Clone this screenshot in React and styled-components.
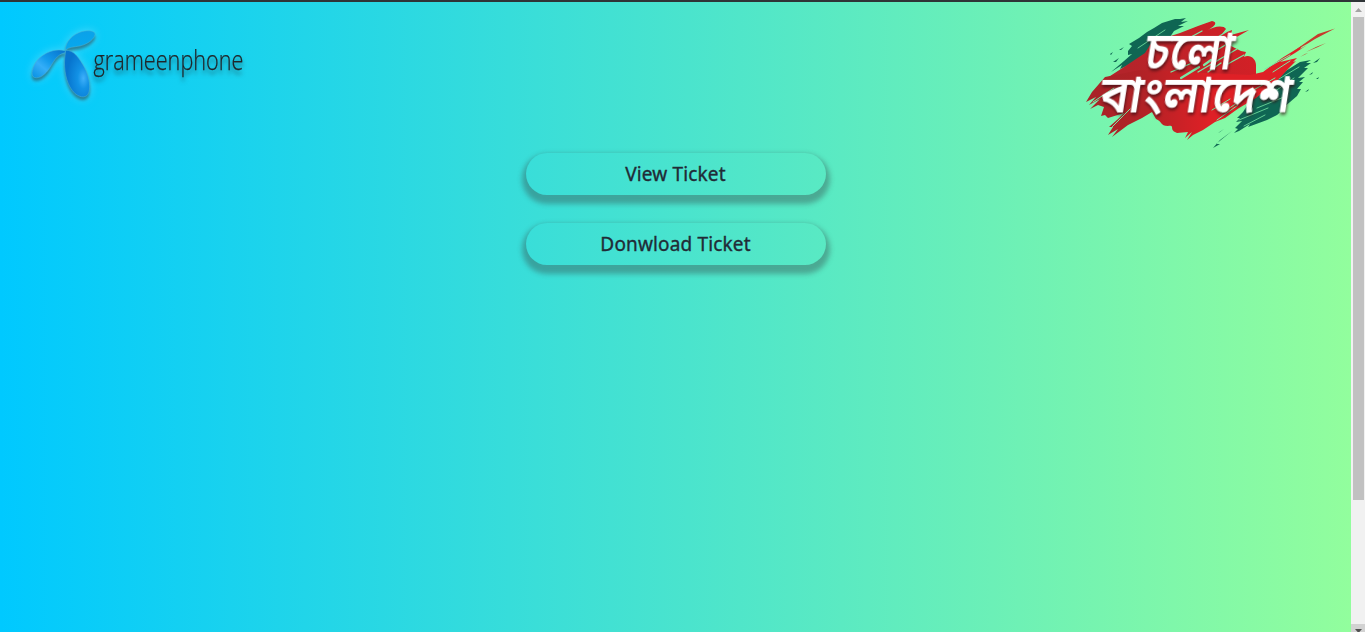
import React from 'react';
import styled, { createGlobalStyle } from 'styled-components';

const Global = createGlobalStyle`
  * { box-sizing: border-box; }
  html, body { margin: 0; overflow: hidden; }
`;

const Shell = styled.div`
  display: flex;
  height: 632px;
  border-top: 2px solid #2f3437;
`;

const Page = styled.main`
  flex: 1;
  background: linear-gradient(to right, #00c9ff, #92fe9d);
`;

const Header = styled.header`
  display: flex;
  justify-content: space-between;
  align-items: flex-start;
  height: 151px;
`;

const Brand = styled.svg`
  width: 260px;
  height: 120px;
  overflow: visible;
`;

const Leaves = styled.g`
  filter: drop-shadow(0 3px 1.5px rgba(40, 60, 70, 0.55)) drop-shadow(0 0 4px rgba(120, 225, 255, 0.6));
`;

const Wordmark = styled.text`
  font: 300 28px 'Open Sans', sans-serif;
  fill: #20262a;
  stroke: #20262a;
  stroke-width: 0.25px;
  filter: drop-shadow(0 4px 2px rgba(30, 50, 60, 0.6));
`;

const Campaign = styled.svg`
  width: 271px;
  height: 151px;
  overflow: visible;
`;

const Slogan = styled.text`
  font: 600 44px 'Noto Sans Bengali', sans-serif;
  fill: #fff;
  filter: drop-shadow(1px 2px 1.5px rgba(50, 10, 15, 0.7));
`;

const Actions = styled.nav`
  display: flex;
  flex-direction: column;
  align-items: center;
  gap: 28px;
`;

const Button = styled.button`
  width: 300px;
  height: 42px;
  padding: 0;
  border: 0;
  border-radius: 21px;
  background: transparent;
  color: #212b36;
  font: 400 19px/42px 'Noto Sans', sans-serif;
  letter-spacing: 0.15px;
  -webkit-text-stroke: 0.35px #212b36;
  box-shadow: 0 5px 5px 4px rgba(55, 75, 75, 0.4);
`;

const Scrollbar = styled.aside`
  display: flex;
  flex-direction: column;
  justify-content: space-between;
  align-items: center;
  width: 14px;
  overflow: hidden;
  background: #f1f1f1;
`;

const ScrollTop = styled.div`
  display: flex;
  flex-direction: column;
  align-items: center;
  padding-top: 6px;
  gap: 5px;
`;

const Arrow = styled.svg`
  display: block;
  width: 7px;
  height: 4px;
`;

const Thumb = styled.div`
  width: 11px;
  height: 483px;
  margin-left: 1px;
  background: #c1c1c1;
`;

const ScrollDown = styled.div`
  display: flex;
  justify-content: center;
  width: 14px;
  height: 8px;
  padding-top: 5px;
  background: #d2d2d2;
`;

function Logo() {
  return (
    <Brand viewBox="0 2 260 120">
      <defs>
        <linearGradient id="upper" x1="0" y1="0" x2="0.3" y2="1">
          <stop offset="0" stopColor="#0c9fe8" />
          <stop offset="1" stopColor="#06a9ee" />
        </linearGradient>
        <linearGradient id="left" x1="1" y1="0" x2="0" y2="1">
          <stop offset="0" stopColor="#0872cc" />
          <stop offset="0.45" stopColor="#129bec" />
          <stop offset="0.65" stopColor="#35aef8" />
          <stop offset="1" stopColor="#0690e2" />
        </linearGradient>
        <radialGradient id="lower" cx="0.75" cy="0.6" r="0.65">
          <stop offset="0" stopColor="#3fb0fa" />
          <stop offset="0.35" stopColor="#1292e6" />
          <stop offset="1" stopColor="#0774ce" />
        </radialGradient>
      </defs>
      <Leaves stroke="#4fb4d4" strokeWidth="0.5">
        <path fill="url(#upper)" d="M65.500 50C65 42 73 34 82 31.500C88 30 95.500 30.500 95 34.500C94.500 39 88 44 80 46C74 47 69 47 65.500 50Z" />
        <path fill="url(#left)" d="M65.500 51C56 47.500 43 53 37 60.500C33 65.500 29.500 76 34.500 77.500C40 79 45.500 74 49 69C53 63 56 54.500 65.500 52.500Z" />
        <path fill="url(#lower)" d="M65.500 50.500C73 49 80 59 84.500 67.500C88 74 91 85 89 92C87 98.500 80.500 98 75 93.500C67 86 64.500 73 64.500 63C64.500 57 65.500 54 65.500 50.500Z" />
      </Leaves>
      <Wordmark x="93.500" y="70" textLength="150" lengthAdjust="spacingAndGlyphs">grameenphone</Wordmark>
    </Brand>
  );
}

function CampaignLogo() {
  return (
    <Campaign viewBox="1080 2 271 151">
      <defs>
        <linearGradient id="paint" gradientUnits="userSpaceOnUse" x1="1100" y1="0" x2="1210" y2="0">
          <stop offset="0" stopColor="#a92327" />
          <stop offset="0.4" stopColor="#b22226" />
          <stop offset="1" stopColor="#df2026" />
        </linearGradient>
        <linearGradient id="upperPaint" gradientUnits="userSpaceOnUse" x1="1130" y1="80" x2="1255" y2="50">
          <stop offset="0" stopColor="#b4242a" />
          <stop offset="1" stopColor="#d32026" />
        </linearGradient>
      </defs>
      <g fill="#0f6653">
        <path d="M1186 18L1180 19L1175 19L1162 23L1154 28L1147 32L1139 38L1129 44L1132 46L1128 51L1128 55L1132 54L1124 61L1111 72L1122 65L1120 69L1142 59L1166 43L1174 31L1184 26L1178 26L1188 21L1181 22Z" />
        <path d="M1110 54L1113 52L1111 55ZM1119 50L1124 47L1121 50ZM1113 62L1119 58L1116 62Z" />
        <path d="M1311 60L1300 62L1284 72L1270 86L1250 101L1243 112L1237 118L1240 118L1236 122L1242 121L1235 128L1238 129L1234 133L1239 131L1250 124L1248 127L1267 120L1277 115L1285 108L1283 108L1297 96L1301 89L1297 89L1303 82L1299 82L1305 77L1298 78L1308 68L1304 68L1311 63L1306 63Z" />
        <path d="M1320 58L1313 63L1317 62ZM1232 131L1220 140L1213 148L1220 144L1216 144ZM1224 129L1218 133L1220 132ZM1313 72L1309 75L1312 74ZM1309 89L1305 92L1308 91ZM1319 77L1316 79L1318 79Z" />
      </g>
      <path fill="url(#upperPaint)" d="M1212 21C1217 22 1216 25 1211 28L1207 31C1213 26 1224 25 1226 29L1222 34L1232 30L1231 35L1249 30L1235 38L1229 45L1241 51L1246 52L1244 57C1250 54 1256 59 1256 65L1256 76L1220 91L1135 92L1104 80L1127 65L1145 53L1152 42L1180 33L1198 26Z" />
      <path fill="url(#paint)" d="M1105 77L1140 70L1250 75L1263 72L1282 58L1303 45L1300 49L1307 45L1295 53L1280 62L1297 58L1293 62L1296 61L1288 69L1278 80L1256 98L1239 108L1225 118L1215 122L1203 130L1193 135L1187 140L1192 132L1185 138L1188 132L1177 133C1168 130 1176 125 1168 126C1160 126 1162 121 1156 119L1152 112L1142 118L1128 125L1112 137L1118 129L1108 135L1113 127L1109 127L1118 119L1124 113L1108 118L1105 115L1101 116L1104 107L1098 105L1090 109L1100 99L1089 105L1096 97L1086 102L1092 92Z" />
      <path fill="#c63a2b" d="M1335 28.500L1318 34L1308 41L1294 51L1307 44L1315 39ZM1326 43L1316 47L1306 52L1318 47ZM1305 54L1300 57L1308 53Z" />
      <g fill="none" stroke="#79eaa5" strokeLinecap="round">
        <path strokeWidth="2.200" d="M1199 67L1181 78M1211 60L1204 65" />
        <path strokeWidth="1.300" d="M1226 32L1213 40M1237 38L1212 53M1237 49L1198 72M1221 63L1208 72M1244 55L1226 65M1202 31L1178 44M1192 63L1171 72" />
        <path strokeWidth="1" d="M1290 55L1265 69M1290 61L1273 72M1275 78L1248 93M1255 91L1222 113M1238 105L1217 120M1230 99L1212 110M1114 88L1093 102M1130 109L1112 127" />
        <path strokeWidth="0.800" d="M1299 67L1279 79M1294 78L1271 94M1284 97L1257 108M1268 108L1239 120M1265 115L1244 126M1165 30L1138 48" />
      </g>
      <Slogan transform="translate(1143 69.500) skewX(-9) scale(1 1.200)" textLength="88" lengthAdjust="spacingAndGlyphs">চলো</Slogan>
      <Slogan transform="translate(1098 112.500) skewX(-9) scale(1 1.180)" textLength="191" lengthAdjust="spacingAndGlyphs">বাংলাদেশ</Slogan>
    </Campaign>
  );
}

export default function App() {
  return (
    <>
      <Global />
      <Shell>
        <Page>
          <Header>
            <Logo />
            <CampaignLogo />
          </Header>
          <Actions>
            <Button>View Ticket</Button>
            <Button>Donwload Ticket</Button>
          </Actions>
        </Page>
        <Scrollbar>
          <ScrollTop>
            <Arrow viewBox="0 0 7 4"><path fill="#a3a3a3" d="M3.500 0L7 4H0Z" /></Arrow>
            <Thumb />
          </ScrollTop>
          <ScrollDown>
            <Arrow viewBox="0 0 7 4"><path fill="#505050" d="M0 0H7L3.500 4Z" /></Arrow>
          </ScrollDown>
        </Scrollbar>
      </Shell>
    </>
  );
}
